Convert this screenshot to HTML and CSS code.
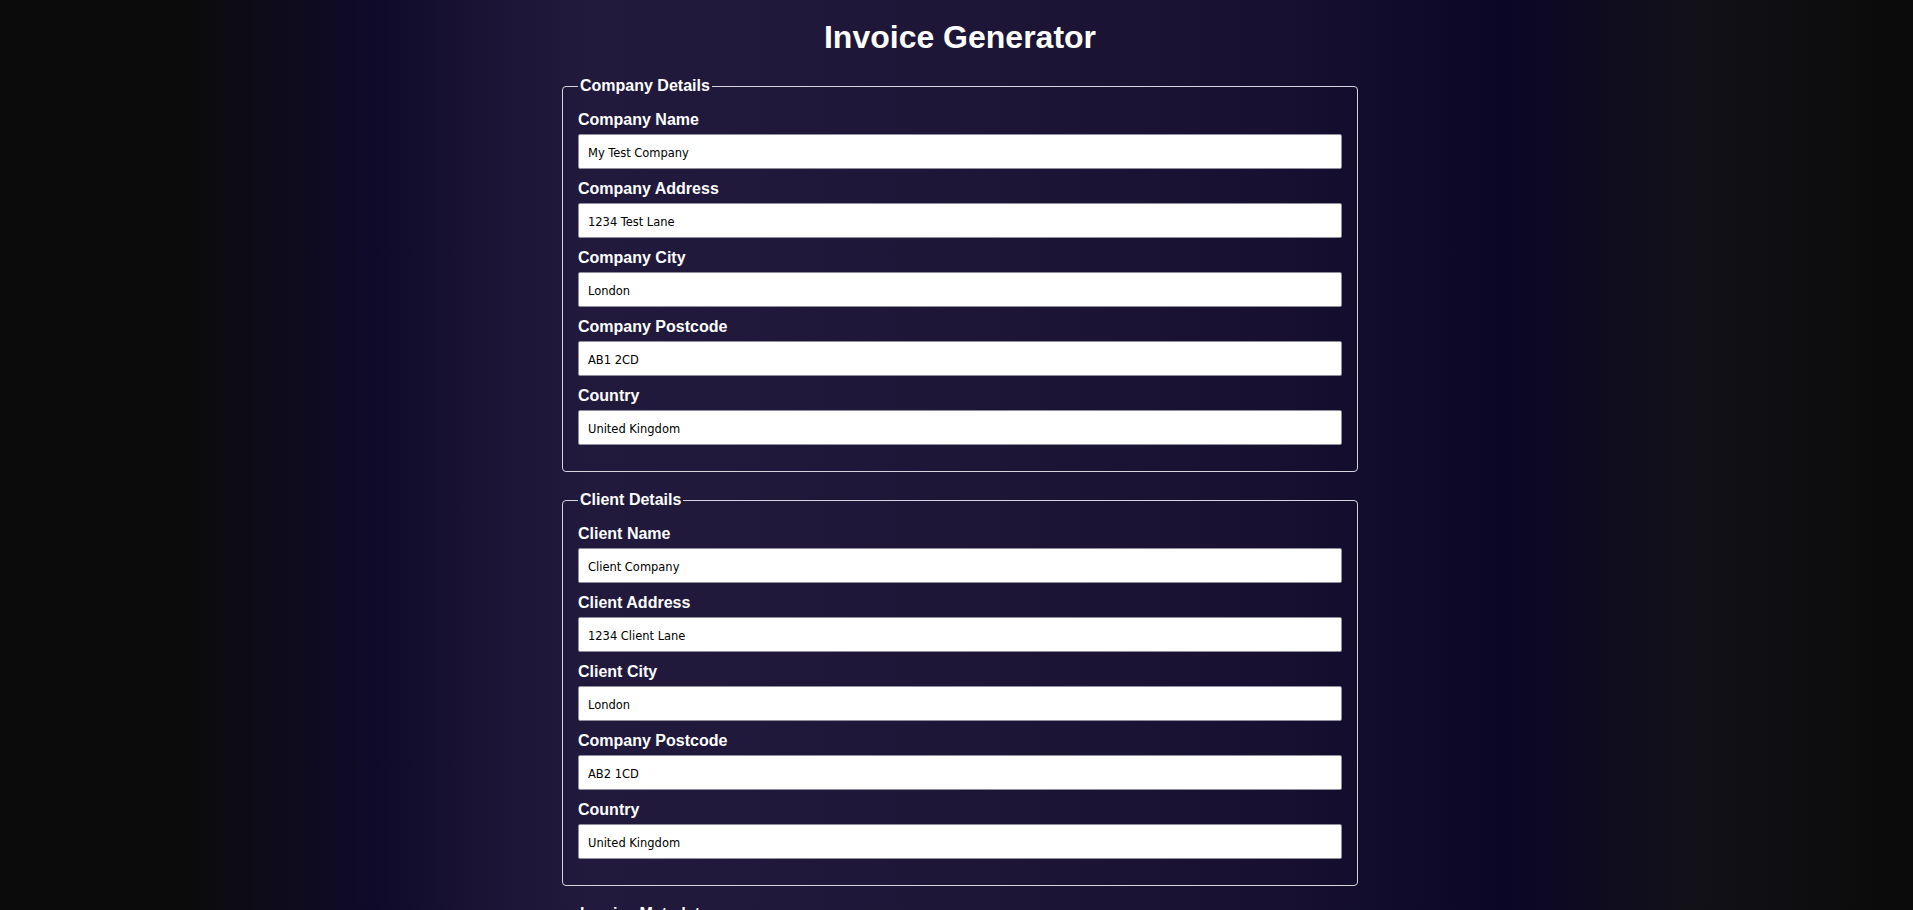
FILE: index.html
```html
<!DOCTYPE html>
<html lang="en">
<head>
<meta charset="utf-8">
<title>Invoice Generator</title>
<link rel="stylesheet" href="styles.css">
</head>
<body>
<div class="container">
  <h1 class="title">Invoice Generator</h1>
  <form class="form">
    <fieldset class="section">
      <legend class="section-title">Company Details</legend>
      <label class="field-label" for="cname">Company Name</label>
      <input class="field-input" id="cname" type="text" value="My Test Company">
      <label class="field-label" for="caddr">Company Address</label>
      <input class="field-input" id="caddr" type="text" value="1234 Test Lane">
      <label class="field-label" for="ccity">Company City</label>
      <input class="field-input" id="ccity" type="text" value="London">
      <label class="field-label" for="cpost">Company Postcode</label>
      <input class="field-input" id="cpost" type="text" value="AB1 2CD">
      <label class="field-label" for="ccountry">Country</label>
      <input class="field-input" id="ccountry" type="text" value="United Kingdom">
    </fieldset>
    <fieldset class="section">
      <legend class="section-title">Client Details</legend>
      <label class="field-label" for="clname">Client Name</label>
      <input class="field-input" id="clname" type="text" value="Client Company">
      <label class="field-label" for="claddr">Client Address</label>
      <input class="field-input" id="claddr" type="text" value="1234 Client Lane">
      <label class="field-label" for="clcity">Client City</label>
      <input class="field-input" id="clcity" type="text" value="London">
      <label class="field-label" for="clpost">Company Postcode</label>
      <input class="field-input" id="clpost" type="text" value="AB2 1CD">
      <label class="field-label" for="clcountry">Country</label>
      <input class="field-input" id="clcountry" type="text" value="United Kingdom">
    </fieldset>
    <fieldset class="section">
      <legend class="section-title">Invoice Metadata</legend>
      <label class="field-label" for="inum">Invoice Number</label>
      <input class="field-input" id="inum" type="text" value="INV-0001">
      <label class="field-label" for="idate">Invoice Date</label>
      <input class="field-input" id="idate" type="text" value="01/01/2024">
      <label class="field-label" for="ddate">Due Date</label>
      <input class="field-input" id="ddate" type="text" value="31/01/2024">
    </fieldset>
  </form>
</div>
</body>
</html>
```

FILE: styles.css
```css
html {
  scrollbar-width: none;
  background: linear-gradient(90deg,
    #0b0b0b 0%,
    #0b0b0b 9.8%,
    #0e0c1b 14.6%,
    #0f0a2a 19.6%,
    #1a1334 25%,
    #211a3d 31%,
    #1d1637 50%,
    #171031 66.9%,
    #0b0626 78.8%,
    #121118 88.3%,
    #0b0b0b 98.6%,
    #0b0b0b 100%);
  background-attachment: fixed;
  min-height: 100%;
}

html::-webkit-scrollbar {
  display: none;
}

body {
  margin: 0;
  padding: 0 0 40px 7px;
  font-family: "Liberation Sans", Arial, sans-serif;
  color: #ffffff;
}

.container {
  width: 800px;
  margin: 0 auto;
}

.title {
  margin: 19px 0 21px;
  font-size: 32px;
  line-height: 37px;
  font-weight: bold;
  text-align: center;
  color: #ffffff;
}

.form {
  margin: 0;
}

.section {
  margin: 0 2px 19px;
  padding: 15px 15px 16px;
  border: 1px solid #d6d4de;
  border-radius: 4px;
  min-width: 0;
}

.section-title {
  padding: 0 2px;
  font-size: 16px;
  font-weight: bold;
  color: #ffffff;
}

.field-label {
  display: block;
  margin-bottom: 5px;
  font-size: 16px;
  line-height: 19px;
  font-weight: bold;
  color: #ffffff;
}

.field-input {
  display: block;
  width: 100%;
  box-sizing: border-box;
  height: 35px;
  margin: 0 0 10px;
  padding: 1px 9px 0;
  border: 1px solid #8f8f9d;
  border-radius: 2px;
  background: #ffffff;
  color: #000000;
  font-family: "DejaVu Sans Condensed", "DejaVu Sans", sans-serif;
  font-size: 12.75px;
}
```
